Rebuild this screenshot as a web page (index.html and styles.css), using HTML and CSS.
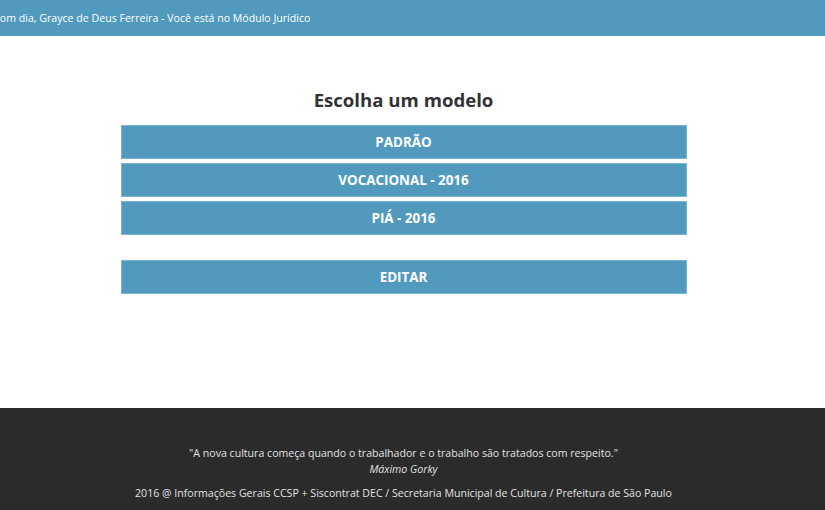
FILE: index.html
```html
<!DOCTYPE html>
<html lang="pt-BR">
<head>
<meta charset="utf-8">
<title>Escolha um modelo</title>
<link rel="stylesheet" href="styles.css">
</head>
<body>
<header class="topbar">
  <p class="greeting">Bom dia, Grayce de Deus Ferreira - Você está no Módulo Jurídico</p>
</header>
<main class="content">
  <h1 class="title">Escolha um modelo</h1>
  <div class="options">
    <a class="btn" href="#">PADRÃO</a>
    <a class="btn" href="#">VOCACIONAL - 2016</a>
    <a class="btn" href="#">PIÁ - 2016</a>
  </div>
  <div class="options edit">
    <a class="btn" href="#">EDITAR</a>
  </div>
</main>
<footer class="footer">
  <p class="quote">"A nova cultura começa quando o trabalhador e o trabalho são tratados com respeito."</p>
  <p class="author">Máximo Gorky</p>
  <p class="credits">2016 @ Informações Gerais CCSP + Siscontrat DEC / Secretaria Municipal de Cultura / Prefeitura de São Paulo</p>
</footer>
</body>
</html>
```
FILE: styles.css
```css
* { box-sizing: border-box; }
html, body { margin: 0; padding: 0; }
body {
  font-family: "Open Sans", "DejaVu Sans", sans-serif;
  background: #fff;
  color: #333;
  width: 825px;
  height: 510px;
  overflow: hidden;
  display: flex;
  flex-direction: column;
}
.topbar {
  background: #519abd;
  height: 36px;
  display: flex;
  align-items: center;
}
.greeting {
  margin: 0 0 1px 0;
  text-indent: -7px;
  color: #fff;
  font-size: 10.6px;
  white-space: nowrap;
}
.content {
  flex: 1;
  padding: 0 18px 0 0;
  display: flex;
  flex-direction: column;
  align-items: center;
}
.title {
  margin: 52px 0 0 0;
  font-size: 18.6px;
  font-weight: 700;
  line-height: 24px;
  color: #333;
}
.options {
  width: 566px;
  display: flex;
  flex-direction: column;
  gap: 4px;
  margin-top: 13px;
}
.options.edit { margin-top: 25px; }
.btn {
  display: flex;
  align-items: center;
  justify-content: center;
  height: 34px;
  background: #519abd;
  border: 1px solid #7ab5d2;
  color: #fff;
  font-weight: 700;
  font-size: 13.4px;
  text-decoration: none;
}
.footer {
  background: #2b2b2b;
  height: 102px;
  padding: 37px 18px 0 0;
  text-align: center;
  color: #e2e2e2;
  font-size: 10.6px;
}
.footer p { margin: 0; }
.quote { line-height: 16px; }
.author { font-style: italic; line-height: 16px; }
.credits { margin-top: 8px !important; line-height: 16px; }
```
